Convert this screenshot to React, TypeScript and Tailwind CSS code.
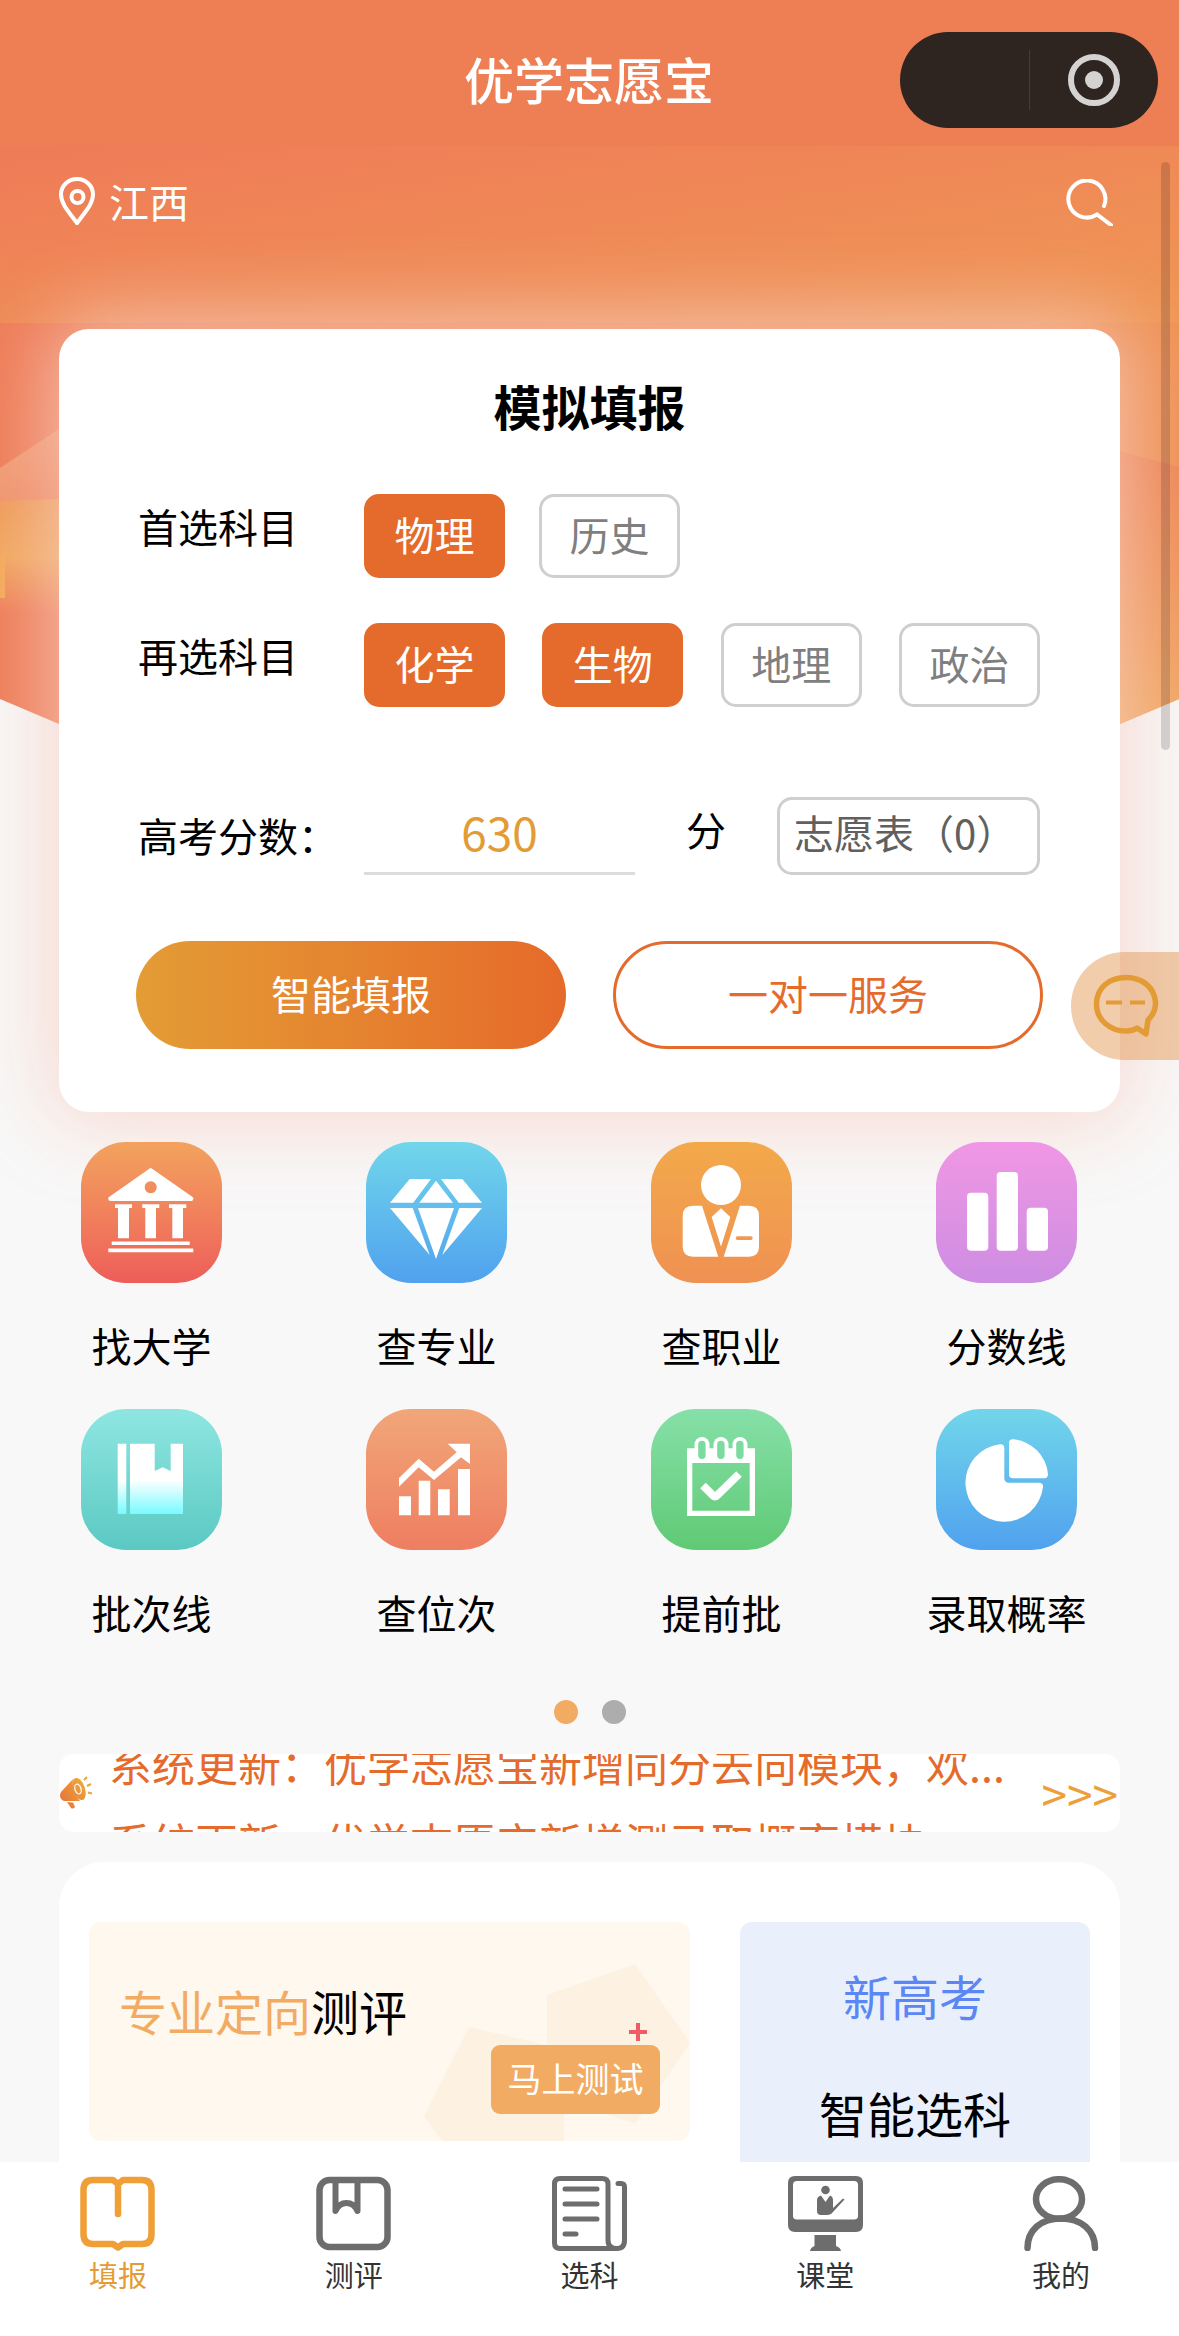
import { useState } from 'react'
import type { ReactNode } from 'react'
import clsx from 'clsx'

const FIRST_SUBJECTS = ['物理', '历史']
const SECOND_SUBJECTS = ['化学', '生物', '地理', '政治']

const CalendarRing = ({ x, hole }: { x: number; hole: string }) => (
  <>
    <rect x={x} y="28" width="15" height="24" rx="7.5" />
    <rect x={x + 3.7} y="31.7" width="7.4" height="18.3" rx="3.7" fill={hole} />
  </>
)

const menuItems: { label: string; bg: string; icon: ReactNode }[] = [
  {
    label: '找大学',
    bg: 'from-[#f2a25e] to-[#ed5d59]',
    icon: (
      <>
        <path
          fillRule="evenodd"
          d="M69.7 25.7 L112.3 55.5 V57 Q112.3 59 110.3 59 H29.3 Q27.3 59 27.3 57 V55.5 Z M69.7 39.3 a6 6 0 1 0 .01 0 Z"
        />
        <path d="M34 62.3 H51 V66 H48 V96.3 H37 V66 H34 Z M61.3 62.3 H78.3 V66 H75 V96.3 H64.3 V66 H61.3 Z M88 62.3 H105.3 V66 H102 V96.3 H91.3 V66 H88 Z" />
        <path d="M30.7 99.5 H108.7 V103 H30.7 Z M27.3 106.5 H112.3 V110.3 H27.3 Z" />
      </>
    ),
  },
  {
    label: '查专业',
    bg: 'from-[#72d6ea] to-[#51a1ee]',
    icon: (
      <>
        <path d="M43.7 37 H65 L47.3 60.7 H24 Z M70 38.7 L87 60.7 H53.3 Z M75 37 H96.3 L116 60.7 H92.7 Z" />
        <path d="M24 66 H46.7 L63.7 113 Z M52 66 H88 L70 117 Z M93.3 66 H116 L76.3 113 Z" />
      </>
    ),
  },
  {
    label: '查职业',
    bg: 'from-[#f3a94a] to-[#ef9152]',
    icon: (
      <>
        <circle cx="70" cy="43" r="20" />
        <path d="M42 63.7 H51 L67.3 114.7 H42 Q31.7 114.7 31.7 104.5 V74 Q31.7 63.7 42 63.7 Z" />
        <path
          fillRule="evenodd"
          d="M89 63.7 H98 Q108 63.7 108 74 V104.5 Q108 114.7 98 114.7 H72.7 Z M86.5 94.3 Q84.7 94.3 84.7 96.2 Q84.7 98 86.5 98 H100 Q101.7 98 101.7 96.2 Q101.7 94.3 100 94.3 Z"
        />
        <path d="M70 66.3 L79.3 75 L70 104.7 L60.7 75 Z" />
      </>
    ),
  },
  {
    label: '分数线',
    bg: 'from-[#f097e4] to-[#cd8de2]',
    icon: (
      <>
        <rect x="31" y="50.7" width="21.3" height="58" rx="4" />
        <rect x="60.7" y="30" width="21.3" height="78.7" rx="4" />
        <rect x="90.7" y="65.7" width="21.3" height="43" rx="4" />
      </>
    ),
  },
  {
    label: '批次线',
    bg: 'from-[#8ee6e1] to-[#5ac9c2]',
    icon: (
      <>
        <defs>
          <linearGradient id="book" gradientUnits="userSpaceOnUse" x1="0" y1="71" x2="0" y2="104">
            <stop offset="0" stopColor="#fff" />
            <stop offset="1" stopColor="#7bfbff" />
          </linearGradient>
        </defs>
        <path
          fill="url(#book)"
          d="M36.7 34.7 H45.3 V105 H36.7 Z M49 34.7 H73.7 V62 L81.7 58.3 L89.7 62 V34.7 H102 V105 H49 Z"
        />
      </>
    ),
  },
  {
    label: '查位次',
    bg: 'from-[#f1a679] to-[#ee7e61]',
    icon: (
      <>
        <path d="M33 87.3 H45 V106.3 H33 Z M52.7 71.7 H64.3 V106.3 H52.7 Z M72 80.3 H83.7 V106.3 H72 Z M92 60 H104 V106.3 H92 Z" />
        <path d="M33 69 L52.7 49.7 L68 62.7 L90.7 43.3 L81.7 34.7 H104 V55 L95 48.3 L68 71 L52.7 58.3 L33 77.7 Z" />
      </>
    ),
  },
  {
    label: '提前批',
    bg: 'from-[#86e0a8] to-[#5fca75]',
    icon: (
      <>
        <path fillRule="evenodd" d="M36 39.3 H104 V107 H36 Z M41.3 54 V101.7 H98.7 V54 Z" />
        <CalendarRing x={43.5} hole="#7cdb9f" />
        <CalendarRing x={62.5} hole="#7cdb9f" />
        <CalendarRing x={81.5} hole="#7cdb9f" />
        <path
          d="M52 76.5 L62 86.5 Q64 88.5 66 86.5 L88 65"
          fill="none"
          stroke="#fff"
          strokeWidth="8"
        />
      </>
    ),
  },
  {
    label: '录取概率',
    bg: 'from-[#72d6ea] to-[#51a1ee]',
    icon: (
      <>
        <path d="M64 35.2 Q68.3 34.8 68.3 39 V69 Q68.3 73.7 73 73.7 H103 Q107.3 73.7 107 78 A38.9 38.9 0 1 1 64 35.2 Z" />
        <path d="M73 34 Q73 30 77 30.2 A38.5 38.5 0 0 1 112 65.3 Q112 69.3 108 69.3 H77 Q73 69.3 73 65.3 Z" />
      </>
    ),
  },
]

const tabs: { label: string; icon: ReactNode }[] = [
  {
    label: '填报',
    icon: (
      <path
        d="M38 38 V8 L33 4 H13 Q3.5 4 3.5 14 V58 Q3.5 68 13 68 H33 L38 71.5 L43 68 H62 Q71.500 68 71.500 58 V14 Q71.500 4 62 4 H43 L38 8"
        strokeWidth="6.5"
      />
    ),
  },
  {
    label: '测评',
    icon: (
      <>
        <rect x="3.5" y="4" width="68" height="67" rx="10" strokeWidth="6.5" />
        <path d="M19.5 5 V35 Q23 27 30.5 27 Q38 27 41.5 35 V5" strokeWidth="6" />
      </>
    ),
  },
  {
    label: '选科',
    icon: (
      <>
        <path
          d="M66 7.5 H69 Q72.5 7.5 72.5 11 V64 Q72.5 72.5 65 72.5 Q56 72.5 56 64 V8 Q56 2.5 50 2.5 H8 Q2.5 2.5 2.5 8 V67 Q2.5 72.5 8 72.5 H65"
          strokeWidth="5"
        />
        <path d="M13 13 H45 M13 28 H45 M13 43 H45 M13 58 H24" strokeWidth="5" />
      </>
    ),
  },
  {
    label: '课堂',
    icon: (
      <g fill="currentColor" stroke="none">
        <path
          fillRule="evenodd"
          d="M7 0 H68 Q75 0 75 7 V49 Q75 56 68 56 H7 Q0 56 0 49 V7 Q0 0 7 0 Z M9 5 Q5 5 5 9 V40 Q5 43.5 9 43.5 H66 Q70 43.5 70 40 V9 Q70 5 66 5 Z"
        />
        <path d="M26.5 59 H48 V70 Q52.5 71.5 53 75 H22 Q22.5 71.5 26.5 70 Z" />
        <circle cx="37.5" cy="14" r="4.3" />
        <path d="M33 19.5 L37.5 26 L42 19.5 Q45 20.5 45 24 V32 L55 22.5 L56.5 23.5 L45 36 Q43 39 40 39 H33 Q29 39 29 35 V24 Q29 20.5 33 19.5 Z" />
      </g>
    ),
  },
  {
    label: '我的',
    icon: (
      <>
        <ellipse cx="35" cy="23" rx="23" ry="19.8" strokeWidth="6.5" />
        <path d="M3.5 72 C3.5 54 17 42.5 37 42.5 C57 42.5 71 54 71 72" strokeWidth="6.5" />
      </>
    ),
  },
]

function SubjectButton({ name, active, onClick }: { name: string; active: boolean; onClick: () => void }) {
  return (
    <button
      type="button"
      aria-pressed={active}
      onClick={onClick}
      className={clsx(
        'h-[84px] w-[141px] rounded-[15px] border-3 pb-1 text-[40px] leading-none',
        active ? 'border-[#e56b2c] bg-[#e56b2c] text-white' : 'border-[#cfcfcf] bg-white text-[#7f7f7f]',
      )}
    >
      {name}
    </button>
  )
}

function HeroBackground() {
  return (
    <div className="absolute inset-x-0 top-0">
      <div className="h-[177px] bg-linear-to-br from-[#ef7b57] to-[#ef9756]" />
      <svg className="block h-[402px] w-full" viewBox="0 0 1179 402" preserveAspectRatio="none">
        <defs>
          <linearGradient id="hero" x1="0" y1="0" x2="1" y2="0">
            <stop offset="0" stopColor="#ee7c57" />
            <stop offset="1" stopColor="#ef9256" />
          </linearGradient>
          <linearGradient id="heroFold" x1="0" y1="0" x2="1" y2="1">
            <stop offset="0" stopColor="#f1a37c" />
            <stop offset="1" stopColor="#ef8259" />
          </linearGradient>
          <linearGradient id="heroLeft" x1="0" y1="0" x2="0" y2="1">
            <stop offset="0" stopColor="#ef9a58" />
            <stop offset="0.5" stopColor="#f1a75c" />
            <stop offset="1" stopColor="#ee7c57" />
          </linearGradient>
          <linearGradient id="heroRight" x1="0" y1="0" x2="0" y2="1">
            <stop offset="0" stopColor="#ee8455" />
            <stop offset="1" stopColor="#f1a863" />
          </linearGradient>
        </defs>
        <path d="M0 0 H1179 V376 L1120 401 H59 L0 376 Z" fill="url(#hero)" />
        <path d="M0 145 L59 106 V178 L0 180 Z" fill="url(#heroFold)" />
        <path d="M0 178 L59 176 V290 H0 Z" fill="url(#heroLeft)" />
        <path d="M0 232 H5 V275 H0 Z" fill="#f3a957" />
        <path d="M1120 128 L1179 144 V376 L1120 401 Z" fill="url(#heroRight)" />
      </svg>
    </div>
  )
}

export default function App() {
  const [first, setFirst] = useState('物理')
  const [second, setSecond] = useState(['化学', '生物'])
  const [score, setScore] = useState('630')
  const [tab, setTab] = useState('填报')

  const toggleSecond = (name: string) =>
    setSecond((prev) => (prev.includes(name) ? prev.filter((s) => s !== name) : [...prev, name]))

  return (
    <div className="relative flex h-screen flex-col overflow-hidden bg-[#f8f8f8] font-['Noto_Sans_CJK_SC',sans-serif] text-black">
      <header className="grid h-[146px] shrink-0 grid-cols-[1fr_auto_1fr] items-center bg-[#ee7f54] pt-[14px] pr-[21px]">
        <h1 className="col-start-2 pb-1 pl-5 text-[50px] leading-none font-medium text-white">优学志愿宝</h1>
        <div className="flex h-24 w-[258px] items-center justify-self-end rounded-full bg-[#2e2420]">
          <div className="h-[60px] flex-1 border-r border-[#453b37]" />
          <button type="button" aria-label="关闭" className="flex flex-1 justify-center">
            <svg className="size-[54px]" viewBox="0 0 54 54">
              <circle cx="27" cy="27" r="23" fill="none" stroke="#d5d3d2" strokeWidth="6" />
              <circle cx="27" cy="27" r="9" fill="#d5d3d2" />
            </svg>
          </button>
        </div>
      </header>

      <main className="relative min-h-0 flex-1 overflow-hidden">
        <HeroBackground />

        <div className="relative px-[59px]">
          <div className="flex h-[113px] items-center justify-between text-white">
            <button type="button" className="flex items-center gap-[14px] pb-1 text-[40px] leading-none">
              <svg className="h-12 w-9" viewBox="0 0 36 48" fill="none" stroke="currentColor" strokeWidth="4">
                <path d="M18 46 C10 35 2 27 2 17.5 A16 15.5 0 0 1 34 17.5 C34 27 26 35 18 46 Z" />
                <circle cx="18.5" cy="20" r="6" />
              </svg>
              江西
            </button>
            <button type="button" aria-label="搜索" className="pr-[7px]">
              <svg
                className="size-[47px]"
                viewBox="0 0 47 47"
                fill="none"
                stroke="currentColor"
                strokeWidth="4"
                strokeLinecap="round"
              >
                <path d="M38 27 A18.5 18.5 0 1 0 31 35.5 L45 46" />
              </svg>
            </button>
          </div>

          <section className="mt-[70px] rounded-[30px] bg-white px-[77px] pt-[45px] pb-[63px] shadow-[0_0_80px_10px_rgba(247,208,195,0.8)]">
            <h2 className="text-center text-[48px] leading-[62px] font-bold">模拟填报</h2>

            <div className="mt-[58px] flex pl-[2px]">
              <span className="w-[226px] shrink-0 text-[40px] leading-[64px]">首选科目</span>
              <div className="flex gap-[34px]">
                {FIRST_SUBJECTS.map((name) => (
                  <SubjectButton key={name} name={name} active={first === name} onClick={() => setFirst(name)} />
                ))}
              </div>
            </div>

            <div className="mt-[45px] flex pl-[2px]">
              <span className="w-[226px] shrink-0 text-[40px] leading-[64px]">再选科目</span>
              <div className="flex flex-1 justify-between pr-[3px]">
                {SECOND_SUBJECTS.map((name) => (
                  <SubjectButton
                    key={name}
                    name={name}
                    active={second.includes(name)}
                    onClick={() => toggleSecond(name)}
                  />
                ))}
              </div>
            </div>

            <div className="mt-[90px] flex h-[78px] pr-[3px] pl-[2px]">
              <label htmlFor="score" className="w-[226px] shrink-0 text-[40px] leading-[76px]">
                高考分数：
              </label>
              <input
                id="score"
                value={score}
                onChange={(e) => setScore(e.target.value)}
                className="w-[271px] min-w-0 border-b-3 border-[#dcdcdc] pb-2 text-center text-[46px] leading-none text-[#e39c35] outline-none"
              />
              <span className="flex-1 text-center text-[40px] leading-[64px]">分</span>
              <button
                type="button"
                className="w-[263px] rounded-[15px] border-3 border-[#cfcfcf] pb-2 pl-[14px] text-left text-[40px] leading-none whitespace-nowrap text-[#606060]"
              >
                志愿表（0）
              </button>
            </div>

            <div className="mt-[66px] grid grid-cols-2 gap-[47px]">
              <button
                type="button"
                className="h-[108px] rounded-full bg-linear-to-r from-[#e39c35] to-[#e56a2a] pb-1 text-[40px] leading-none text-white"
              >
                智能填报
              </button>
              <button
                type="button"
                className="h-[108px] rounded-full border-3 border-[#e56b2c] pb-1 text-[40px] leading-none text-[#e56b2c]"
              >
                一对一服务
              </button>
            </div>
          </section>
        </div>

        <div className="relative mt-[30px] mr-[30px] ml-[9px] grid grid-cols-4 gap-y-[30px]">
          {menuItems.map((item) => (
            <a key={item.label} href="#" className="flex flex-col items-center">
              <span className={clsx('size-[141px] rounded-[45px] bg-linear-to-b', item.bg)}>
                <svg viewBox="0 0 141 141" fill="#fff">
                  {item.icon}
                </svg>
              </span>
              <span className="mt-[30px] pb-[2px] text-[40px] leading-[64px]">{item.label}</span>
            </a>
          ))}
        </div>

        <div className="mt-[54px] flex justify-center gap-6">
          <span className="size-6 rounded-full bg-[#f2ab62]" />
          <span className="size-6 rounded-full bg-[#adadad]" />
        </div>

        <div className="mx-[59px] mt-[30px] flex h-[78px] items-center overflow-hidden rounded-[15px] bg-white">
          <svg className="size-[34px] shrink-0" viewBox="0 0 34 34" fill="url(#horn)">
            <defs>
              <linearGradient id="horn" gradientUnits="userSpaceOnUse" x1="0" y1="24" x2="30" y2="8">
                <stop offset="0" stopColor="#e6743a" />
                <stop offset="1" stopColor="#eeac3c" />
              </linearGradient>
            </defs>
            <path d="M14 3 L2 16 Q-1 22 5 25 L21 25 Q12 15 14 3 Z" />
            <ellipse cx="20" cy="13" rx="6" ry="11.5" transform="rotate(-18 20 13)" />
            <path d="M8 26 L14 26.5 L16 31 Q14 33.5 12 32 Z" />
            <ellipse cx="19" cy="13" rx="3" ry="5" transform="rotate(-18 19 13)" fill="none" stroke="#fff" strokeWidth="1.3" />
            <path d="M25 4 L28 1 M28 10 L32 8 M29 16.5 L33 17.5" stroke="#eba53a" strokeWidth="2" />
          </svg>
          {/* 公告滚动 */}
          <div className="-mt-[60px] ml-4 h-[78px] min-w-0 flex-1 text-[43px] leading-[78px] whitespace-nowrap text-[#e56b2c]">
            <p>系统更新：优学志愿宝新增同分去向模块，欢...</p>
            <p>系统更新：优学志愿宝新增测录取概率模块</p>
          </div>
          <a href="#" className="pr-[2px] text-[46px] leading-none text-[#eca03b]">
            &gt;&gt;&gt;
          </a>
        </div>

        <section className="mx-[59px] mt-[30px] flex items-start gap-[50px] rounded-t-[45px] bg-white px-[30px] pt-[60px]">
          <div className="relative h-[219px] min-w-0 flex-1 overflow-hidden rounded-[12px] bg-[#fff8ee]">
            <svg className="absolute top-0 right-0 h-[219px] w-[270px]" viewBox="0 0 270 219" fill="#fdf1e1">
              <path d="M127 73 L215 42 L270 121 L215 202 L127 171 Z" />
              <path d="M49 105 L144 127 V219 H22 L4 194 Z" />
            </svg>
            <p className="relative pt-[57px] pl-[30px] text-[48px] leading-[62px]">
              <span className="text-[#f2ab62]">专业定向</span>测评
            </p>
            <svg className="absolute top-[101px] right-[43px] size-[18px]" viewBox="0 0 18 18">
              <path d="M9 0 V18 M0 9 H18" stroke="#ee5c68" strokeWidth="4" />
            </svg>
            <button
              type="button"
              className="absolute right-[30px] bottom-[27px] h-[69px] w-[169px] rounded-[9px] bg-[#f2ab62] pb-1 text-[34px] leading-none text-white"
            >
              马上测试
            </button>
          </div>
          <div className="h-[520px] w-[350px] shrink-0 rounded-[12px] bg-[#e9f0fc] pt-[42px] text-center text-[48px] leading-[62px]">
            <p className="text-[#5b87f5]">新高考</p>
            <p className="mt-[55px]">智能选科</p>
          </div>
        </section>

        <div className="absolute top-4 right-[9px] h-[588px] w-[9px] rounded-full bg-black/15" />

        <button
          type="button"
          aria-label="在线客服"
          className="absolute top-[806px] right-0 flex h-[108px] w-[108px] items-center rounded-l-full bg-[#e39c5a]/50 pl-[22px]"
        >
          <svg className="size-[66px]" viewBox="0 0 66 66" fill="none" stroke="#e39c35" strokeWidth="5.5">
            <path
              d="M55 47 Q63 39 62.5 29 C61 13 48 4.5 33 4.5 C16 4.5 3.5 15 3.5 31 C3.5 47 17 58 33 58 Q40 58 44 55 L53 61 Z"
              strokeLinejoin="round"
            />
            <path d="M13 29.5 H29 M37 29.5 H52" strokeWidth="4" />
          </svg>
        </button>
      </main>

      <nav className="relative grid h-[174px] shrink-0 grid-cols-5 bg-white pt-[14px]">
        {tabs.map((item) => (
          <a
            key={item.label}
            href="#"
            onClick={() => setTab(item.label)}
            className={clsx('flex flex-col items-center', tab === item.label ? 'text-[#e39c35]' : 'text-[#333333]')}
          >
            <svg
              className={clsx('size-[75px]', tab === item.label ? 'text-[#ef9f36]' : 'text-[#6d6d6d]')}
              viewBox="0 0 75 75"
              fill="none"
              stroke="currentColor"
              strokeLinecap="round"
              strokeLinejoin="round"
            >
              {item.icon}
            </svg>
            <span className="mt-[2px] text-[29px] leading-[42px]">{item.label}</span>
          </a>
        ))}
      </nav>
    </div>
  )
}
